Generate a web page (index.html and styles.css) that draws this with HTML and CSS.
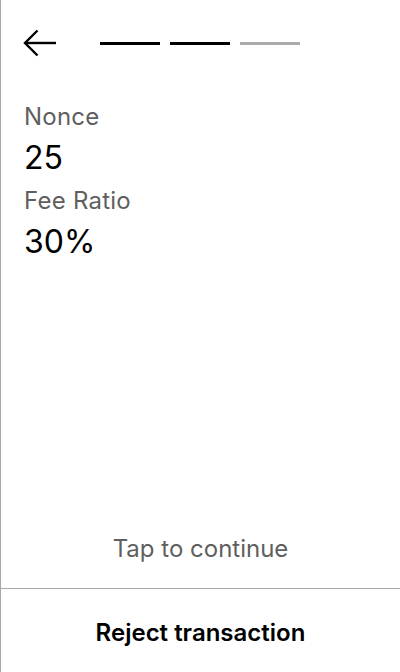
FILE: index.html
```html
<!DOCTYPE html>
<html lang="en">
<head>
<meta charset="utf-8">
<title>Transaction</title>
<link rel="stylesheet" href="styles.css">
</head>
<body>
<div class="screen">
  <header class="top">
    <button class="back" aria-label="Back">
      <svg width="34" height="28" viewBox="0 0 34 28" fill="none" stroke="#000" stroke-width="2.4" stroke-linecap="butt" stroke-linejoin="miter">
        <path d="M33 14H2"/>
        <path d="M14.5 1.5L2 14L14.5 26.5"/>
      </svg>
    </button>
    <div class="steps">
      <span class="step done"></span>
      <span class="step done"></span>
      <span class="step"></span>
    </div>
  </header>
  <main class="content">
    <div class="label">Nonce</div>
    <div class="value">25</div>
    <div class="label">Fee Ratio</div>
    <div class="value">30%</div>
  </main>
  <div class="tap">Tap to continue</div>
  <footer class="footer">
    <button class="reject">Reject transaction</button>
  </footer>
</div>
</body>
</html>
```

FILE: styles.css
```css
html, body {
  margin: 0;
  padding: 0;
  height: 100%;
  background: #fff;
}
body {
  font-family: Inter, "Noto Sans", sans-serif;
  color: #000;
}
.screen {
  height: 672px;
  box-sizing: border-box;
  border-left: 1px solid #a8a8a8;
  display: flex;
  flex-direction: column;
}
.top {
  display: flex;
  align-items: center;
  padding: 29px 0 0 22px;
  height: 28px;
}
.back {
  border: 0;
  background: none;
  padding: 0;
  margin: 0;
  width: 34px;
  height: 28px;
  display: block;
}
.back svg { display: block; }
.steps {
  display: flex;
  gap: 10px;
  margin-left: 43px;
}
.step {
  display: block;
  width: 60px;
  height: 3px;
  background: #ababab;
}
.step.done { background: #000; }
.content {
  padding: 46px 24px 0 23px;
  flex: 1;
}
.label {
  font-size: 24px;
  line-height: 28px;
  letter-spacing: 0.01em;
  color: #5f5f5f;
}
.value {
  font-size: 32px;
  line-height: 38px;
  margin-top: 8px;
  margin-bottom: 10px;
}
.tap {
  text-align: center;
  font-size: 24px;
  line-height: 28px;
  color: #5f5f5f;
  padding-bottom: 25px;
}
.footer {
  border-top: 1px solid #a8a8a8;
  height: 84px;
  box-sizing: border-box;
  padding-top: 4px;
  display: flex;
  align-items: center;
  justify-content: center;
}
.reject {
  border: 0;
  background: none;
  font-family: Inter, "Noto Sans", sans-serif;
  font-size: 24px;
  line-height: 28px;
  font-weight: 600;
  color: #000;
  padding: 0;
}
```
